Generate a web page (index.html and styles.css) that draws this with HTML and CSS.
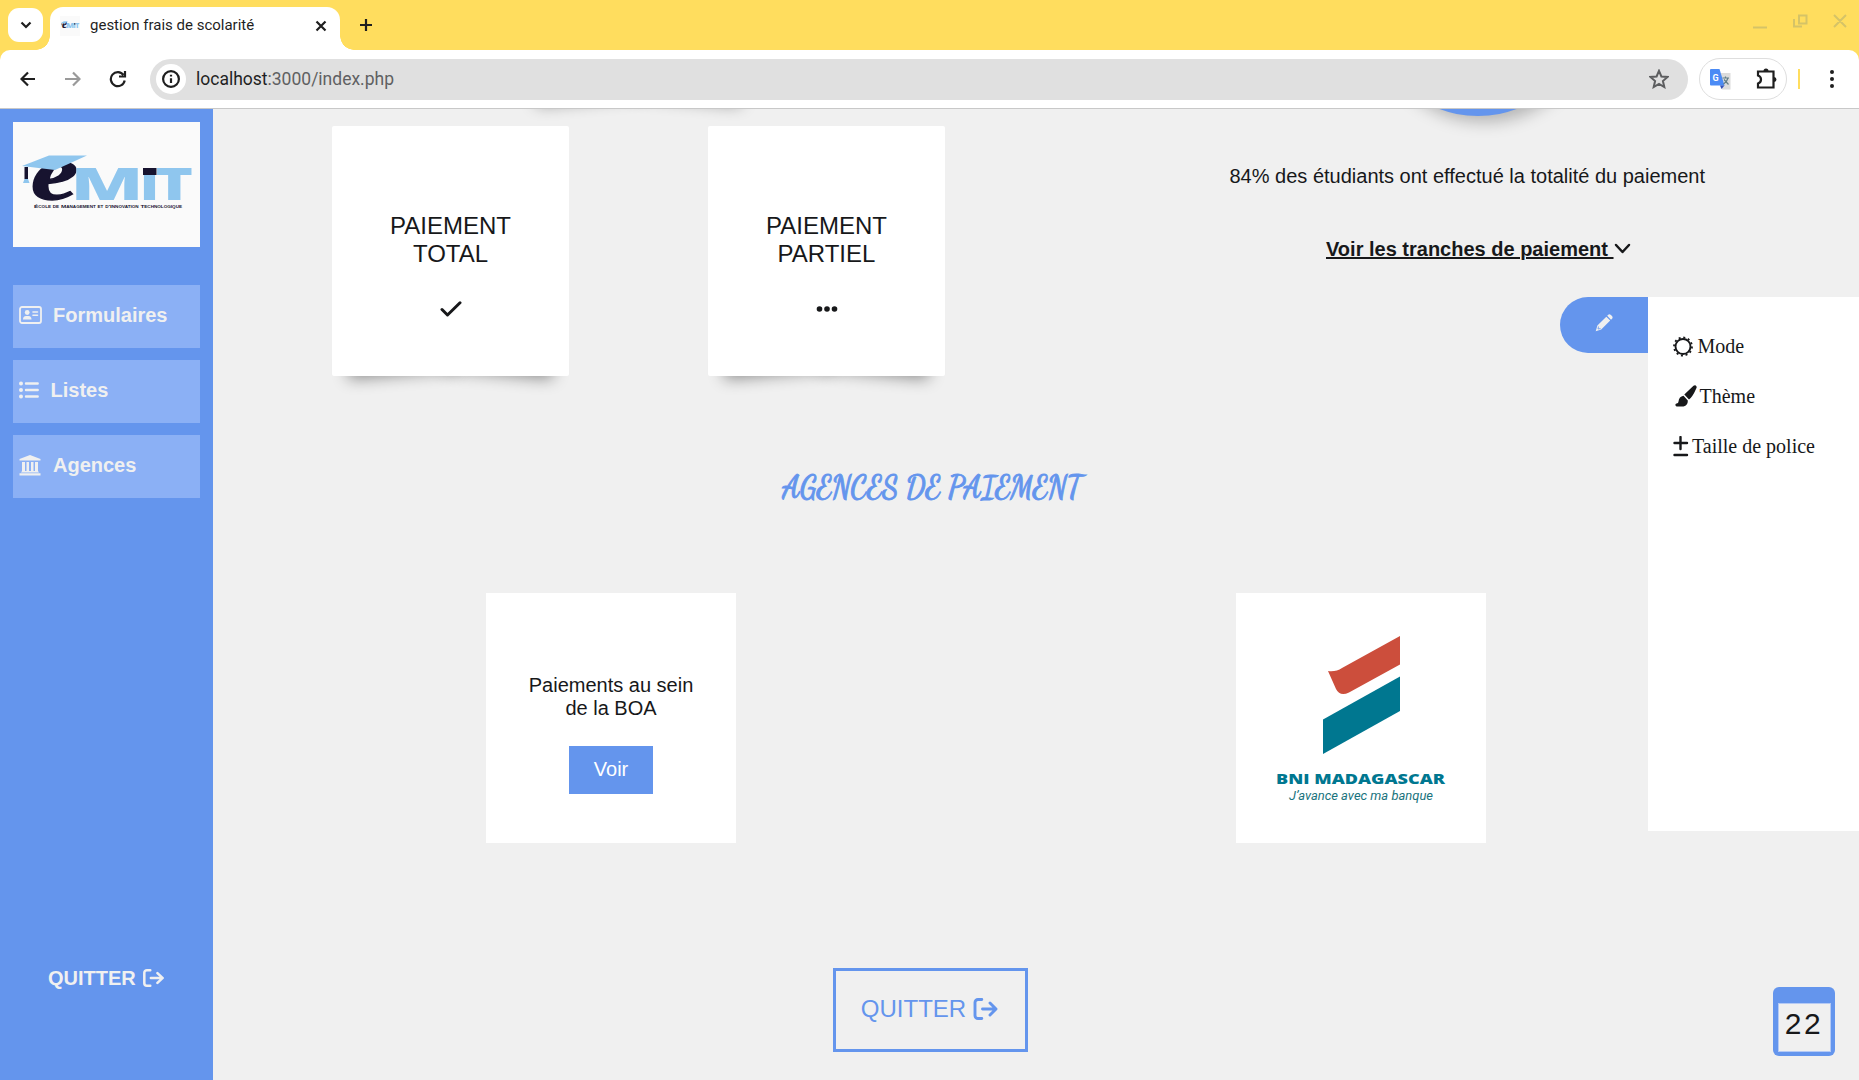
FILE: index.html
```html
<!DOCTYPE html>
<html lang="fr">
<head>
<meta charset="utf-8">
<title>gestion frais de scolarité</title>
<link rel="stylesheet" href="styles.css">
</head>
<body>
<svg class="defs" width="0" height="0">
  <symbol id="emit" viewBox="0 0 187 125">
    <rect width="187" height="125" fill="#fafafa"/>
    <text class="logo-e" x="18" y="76.500" textLength="47" lengthAdjust="spacingAndGlyphs">e</text>
    <path d="M9 44 36 33.500H74L42 48Z" fill="#8fc6ee"/>
    <path d="M11.500 45H15V57H11.500Z" fill="#17132f"/>
    <path d="M11.500 57H15L16.500 61H10Z" fill="#8fc6ee"/>
    <g class="logo-mit">
      <text x="57.500" y="77.500" textLength="73" lengthAdjust="spacingAndGlyphs">M</text>
      <text x="126.500" y="77.500" textLength="20" lengthAdjust="spacingAndGlyphs">I</text>
      <text x="142.500" y="77.500" textLength="37.500" lengthAdjust="spacingAndGlyphs">T</text>
    </g>
    <path d="M130 46h13.500v7H130Z" fill="#17132f"/>
    <text class="logo-sub" x="21" y="85.500" textLength="148" lengthAdjust="spacingAndGlyphs">École de Management et d'Innovation Technologique</text>
  </symbol>
  <symbol id="exit" viewBox="0 0 24 22">
    <path d="M8.300 1.500H4.500A3 3 0 0 0 1.500 4.500V17.500A3 3 0 0 0 4.500 20.500H8.300M9 11H22M16.500 5 22.500 11 16.500 17" fill="none" stroke="currentColor" stroke-width="2.900" stroke-linecap="round" stroke-linejoin="round"/>
  </symbol>
</svg>

<header class="browser">
  <div class="tabs">
    <button class="tab-search"><svg width="12" height="8"><path d="M1.500 1.500 6 6 10.500 1.500" class="s2"/></svg></button>
    <div class="tab">
      <svg class="favicon" width="20" height="20" viewBox="0 0 187 125" preserveAspectRatio="none"><use href="#emit" width="187" height="125"/></svg>
      <span class="tab-title">gestion frais de scolarité</span>
      <svg width="12" height="12"><path d="M1.500 1.500 10.500 10.500M10.500 1.500 1.500 10.500" class="s2"/></svg>
    </div>
    <svg class="new-tab" width="14" height="14"><path d="M7 1V13M1 7H13" class="s2"/></svg>
    <svg class="window-buttons" width="96" height="16" viewBox="0 0 96 16"><path d="M0 13.500H14M41 5V12.500H49M46 1.500H53.500V9.500H46ZM81 1 93 13M93 1 81 13"/></svg>
  </div>
  <div class="toolbar">
    <svg class="back" width="16" height="16"><path d="M15 8H2M8 1.500 1.500 8 8 14.500" class="s2"/></svg>
    <svg class="forward" width="16" height="16"><path d="M0 8H14M8 1.500 14.500 8 8 14.500" class="s2"/></svg>
    <svg class="reload" width="18" height="18"><path d="M14.500 5A7 7 0 1 0 15.700 10.500M16 1V6.500H10" class="s2"/></svg>
    <div class="address">
      <span class="info"><svg width="18" height="18"><circle cx="9" cy="9" r="7.900" class="s2"/><path d="M9 8.200V13M9 4.800V6.600" class="s2"/></svg></span>
      <span class="url">localhost<i>:3000/index.php</i></span>
      <svg class="star" width="20" height="20"><path d="M10 1.800 12.400 7.500 18.500 8 13.900 12 15.300 18 10 14.800 4.700 18 6.100 12 1.500 8 7.600 7.500Z"/></svg>
    </div>
    <div class="extensions">
      <svg width="21" height="21" viewBox="0 0 21 21"><path d="M8 4H20.500V20.500H12Z" fill="#dcdcdc"/><path d="M0 1Q0 0 1 0H9.500L14.500 16.500H1Q0 16.500 0 15.500Z" fill="#4b8bf5"/><path d="M10 16.500H14.500L11.500 20Z" fill="#3451b8"/><path d="M12.500 9H19M15.500 7.500V9M18 9Q17 13 13.500 15M14 10.500 18.500 15.500" fill="none" stroke="#607d86" stroke-width="1.200"/><text x="2.500" y="12" class="g-mark">G</text></svg>
      <svg width="21" height="22" viewBox="0 0 21 22"><path d="M2 3.500H17.500V19.500H2V15.500Q5 14.500 5 11.500T2 7.500Z" class="s2"/><path d="M7.500 3A2.500 2.500 0 0 1 12.500 3ZM18 9A2.500 2.500 0 0 1 18 14Z" fill="#1f1f1f"/></svg>
    </div>
    <span class="divider"></span>
    <svg width="4" height="18" viewBox="0 0 4 18" fill="#1f1f1f"><circle cx="2" cy="2" r="2"/><circle cx="2" cy="9" r="2"/><circle cx="2" cy="16" r="2"/></svg>
  </div>
</header>

<div class="page">
  <aside class="sidebar">
    <svg class="logo" width="187" height="125"><use href="#emit" width="187" height="125"/></svg>
    <nav>
      <a class="nav-item wide"><svg width="23" height="18" viewBox="0 0 23 18"><rect x="1" y="1" width="21" height="16" rx="2" fill="none" stroke="currentColor" stroke-width="1.800"/><circle cx="8.200" cy="6.500" r="2.400"/><path d="M4 13.500Q4 10 7 10H9.500Q12.500 10 12.500 13.500Z"/><path d="M14 6H18.500M14 9.300H18.500" stroke="currentColor" stroke-width="1.600" stroke-linecap="round"/></svg>Formulaires</a>
      <a class="nav-item list"><svg width="20" height="18" viewBox="0 0 20 18"><circle cx="2" cy="2.500" r="2"/><circle cx="2" cy="9" r="2"/><circle cx="2" cy="15.500" r="2"/><path d="M7 2.500H18.700M7 9H18.700M7 15.500H18.700" stroke="currentColor" stroke-width="2.400" stroke-linecap="round"/></svg>Listes</a>
      <a class="nav-item bank"><svg width="22" height="21" viewBox="0 0 22 21"><path d="M11 0 21.500 4V5.500H.5V4ZM3 7H6V16H7.500V7H10V16H12V7H14.500V16H16V7H19V16L20 17.500H2L3 16ZM.5 18.300H21.500V20.500H.5Z"/></svg>Agences</a>
    </nav>
    <a class="side-quit">QUITTER <svg width="21" height="18" viewBox="0 0 24 22" preserveAspectRatio="none"><use href="#exit" width="24" height="22"/></svg></a>
  </aside>

  <main class="content">
    <span class="pay-card scrolled-card"></span>
    <span class="chart"></span>
    <section class="summary">
      <div class="pay-cards">
        <article class="pay-card"><h3>PAIEMENT<br>TOTAL</h3><svg width="22" height="16" viewBox="0 0 22 16"><path d="M2 8.500 7.500 14 20 1.800" fill="none" stroke="currentColor" stroke-width="3" stroke-linecap="round" stroke-linejoin="round"/></svg></article>
        <article class="pay-card"><h3>PAIEMENT<br>PARTIEL</h3><svg width="22" height="16" viewBox="0 0 22 16"><circle cx="3.500" cy="8" r="2.800"/><circle cx="11" cy="8" r="2.800"/><circle cx="18.500" cy="8" r="2.800"/></svg></article>
      </div>
      <div class="stats">
        <p>84% des étudiants ont effectué la totalité du paiement</p>
        <a class="more"><u>Voir les tranches de paiement </u><svg width="17" height="12" viewBox="0 0 17 12"><path d="M2 2 8.500 9 15 2" fill="none" stroke="currentColor" stroke-width="2.500" stroke-linecap="round" stroke-linejoin="round"/></svg></a>
      </div>
    </section>

    <h2 class="heading"><svg width="310" height="42"><text x="3" y="31.500" textLength="300" lengthAdjust="spacingAndGlyphs">AGENCES DE PAIEMENT</text></svg></h2>

    <section class="agencies">
      <article class="agency">
        <p>Paiements au sein<br>de la BOA</p>
        <a class="view">Voir</a>
      </article>
      <article class="agency">
        <svg width="250" height="250"><path d="M92 78Q100 79 106 75L164 43V71.500L113 99.500Q104 104 100 96Z" fill="#cc4e3c"/><path d="M87 126.500 164 83.500V118L87 161Z" fill="#007790"/><text class="bni" x="40" y="190.500" textLength="169" lengthAdjust="spacingAndGlyphs">BNI MADAGASCAR</text><text class="slogan" x="53" y="206.500" textLength="144" lengthAdjust="spacingAndGlyphs">J’avance avec ma banque</text></svg>
      </article>
    </section>

    <a class="quit">QUITTER <svg width="25" height="22"><use href="#exit" width="25" height="22"/></svg></a>
  </main>

  <div class="settings">
    <button class="edit"><svg width="18" height="18" viewBox="0 0 18 18" fill="#f0f0f0"><path d="M12.200 1.800 13.200.8Q14.500-.3 15.900.9L17 2.100Q18.200 3.500 17 4.800L16 5.700ZM11.300 2.700 15.200 6.600 6.200 15.500 .7 17.300 2.400 11.600Z"/><path d="M3.500 12.500 3 15 5.500 14.500" fill="none" stroke="#6495ed" stroke-width=".8"/></svg></button>
    <div class="panel">
      <a class="mode"><svg width="20" height="21" viewBox="0 0 20 21"><circle cx="10" cy="10.500" r="7.500" fill="none" stroke="currentColor" stroke-width="1.900"/><circle cx="10" cy="10.500" r="9" fill="none" stroke="currentColor" stroke-width="1.800" stroke-dasharray="2 2.712"/></svg>Mode</a>
      <a class="theme"><svg width="22" height="22" viewBox="0 0 22 22"><path d="M21.500 1.500Q20.500-.5 18.500.8L9.300 9.500 14 14.500Q17.500 12 21 4Q22 2.500 21.500 1.500ZM8.500 10.700Q4 11.500 3.500 16.500 3.500 18.500 1.500 18.500 0 19 .5 20.500L1.500 21.500H8.500Q13 20 12.800 15.500Z"/></svg>Thème</a>
      <a class="size"><svg width="16" height="21" viewBox="0 0 16 21"><path d="M7.500 1V13M1.500 7H14M1.500 19H14" fill="none" stroke="currentColor" stroke-width="2.400" stroke-linecap="round"/></svg>Taille de police</a>
    </div>
  </div>
  <div class="calendar"><span>22</span></div>
</div>
</body>
</html>
```
FILE: styles.css
```css
* { box-sizing: border-box; }
body { margin: 0; height: 1080px; overflow: hidden; background: #f0f0f0; color: #17181a; font-family: "Liberation Sans", Arial, sans-serif; display: flex; flex-direction: column; }
svg { display: block; flex: none; }
button { border: 0; padding: 0; display: flex; align-items: center; justify-content: center; }
h2, h3, p { margin: 0; font-weight: 400; }
.defs { position: absolute; }
.s2 { fill: none; stroke: currentColor; stroke-width: 2.2; }

.browser { height: 109px; flex: none; background: #ffdd5e; color: #1f1f1f; font-family: Roboto, sans-serif; border-bottom: 1px solid #c8c8c8; }
.tabs { height: 50px; display: flex; align-items: flex-start; padding: 7px 16px 0 8px; }
.tab-search { width: 35px; height: 34px; margin-top: 1px; border-radius: 11px; background: #fff; color: #1f1f1f; }
.tab { position: relative; width: 290px; height: 43px; margin-left: 7px; padding: 0 13px 6px 10px; border-radius: 13px 13px 0 0; background: #fff; display: flex; align-items: center; }
.tab::before, .tab::after { content: ""; position: absolute; bottom: 0; width: 14px; height: 14px; }
.tab::before { left: -14px; background: radial-gradient(circle at 0 0, transparent 13.5px, #fff 14px); }
.tab::after { right: -14px; background: radial-gradient(circle at 100% 0, transparent 13.5px, #fff 14px); }
.tab-title { margin: -1px 0 0 10px; flex: 1; font-size: 15px; white-space: nowrap; }
.new-tab { margin: 11px 0 0 19px; }
.window-buttons { margin: 7px -6px 0 auto; fill: none; stroke: #d5c367; stroke-width: 2; }
.toolbar { height: 58px; background: #fff; border-radius: 10px 10px 0 0; display: flex; align-items: center; padding: 0 25px 0 20px; }
.forward { margin-left: 29px; color: #9a9a9a; }
.reload { margin-left: 28px; }
.address { height: 41px; flex: 1; margin-left: 23px; border-radius: 21px; background: #e0e0e0; display: flex; align-items: center; padding: 0 19px 0 6px; }
.info { width: 30px; height: 30px; border-radius: 50%; background: #fff; display: grid; place-items: center; }
.url { flex: 1; margin-left: 10px; font-size: 17.5px; }
.url i { font-style: normal; color: #5f6062; }
.star { fill: none; stroke: #5d5e60; stroke-width: 2; }
.extensions { width: 88px; height: 42px; margin-left: 11px; border: 1px solid #dedede; border-radius: 21px; display: flex; align-items: center; justify-content: space-between; padding: 0 9px 0 10px; }
.g-mark { font: bold 9px Roboto, sans-serif; fill: #fff; }
.divider { width: 2px; height: 20px; margin: 0 30px 0 11px; background: #ffdd5e; }

.page { position: relative; flex: 1; display: flex; overflow: hidden; }
.sidebar { width: 213px; flex: none; background: #6495ed; color: #f0f0f0; padding: 13px; display: flex; flex-direction: column; font-size: 20px; font-weight: 700; }
.logo-e { font: italic bold 79px "Liberation Serif", serif; fill: #17132f; stroke: #17132f; stroke-width: 1.4; }
.logo-mit { font: 800 43.500px "Open Sans", sans-serif; fill: #8fc6ee; }
.logo-sub { font: bold 4.2px "Liberation Sans", sans-serif; font-variant: small-caps; fill: #17132f; }
nav { margin-top: 38px; display: flex; flex-direction: column; gap: 12px; }
.nav-item { height: 63px; background: #8bb0f5; display: flex; align-items: center; padding: 0 5.5px 3px; fill: currentColor; gap: 11.5px; }
.nav-item.bank { gap: 12.5px; }
.nav-item.list { gap: 12px; }
.side-quit { margin: 468px 0 0 35px; line-height: 24px; display: flex; align-items: center; gap: 7px; font-size: 20px; }

.content { position: relative; z-index: 0; flex: 1; overflow: hidden; }
.chart { position: absolute; left: 1155px; top: -213px; width: 220px; height: 220px; border-radius: 50%; background: #6495ed; box-shadow: 6px 6px 16px rgba(0,0,0,.25); }
.summary { display: flex; padding: 17px 0 0 119px; height: 267px; }
.pay-cards { display: flex; gap: 139px; }
.pay-card { position: relative; width: 237px; height: 250px; border-radius: 2px; background: #fff; display: flex; flex-direction: column; align-items: center; fill: currentColor; }
.pay-card::before, .pay-card::after { content: ""; position: absolute; z-index: -1; bottom: 13px; width: 46%; height: 20px; box-shadow: 0 11px 16px rgba(0,0,0,.45); }
.pay-card::before { left: 15px; transform: rotate(-5deg); }
.pay-card::after { right: 15px; transform: rotate(5deg); }
.scrolled-card { position: absolute; left: 307px; top: -257px; }
.pay-card h3 { margin-top: 86px; font-size: 24px; line-height: 28px; text-align: center; }
.pay-card svg { margin-top: 33px; }
.stats { padding-top: 38px; margin-left: 284.5px; font-size: 20px; line-height: 24px; white-space: nowrap; }
.more { display: flex; align-items: center; margin: 49px 0 0 96.5px; font-weight: 700; }
.more u { white-space: pre; text-decoration-thickness: 2px; }
.heading { height: 42px; margin: 89px 0 0 566px; }
.heading text { font: 700 32px "Dancing Script", cursive; fill: #6495ed; stroke: #6495ed; stroke-width: .9; }
.agencies { margin: 86px 0 0 273px; display: flex; gap: 500px; }
.agency { width: 250px; height: 250px; background: #fff; font-size: 20px; line-height: 23px; text-align: center; display: flex; flex-direction: column; align-items: center; }
.agency p { margin-top: 81px; }
.view { width: 84px; height: 48px; margin-top: 26px; background: #6495ed; color: #fff; line-height: 47px; }
.bni { font: 800 14.5px "Open Sans", sans-serif; fill: #007790; }
.slogan { font: italic 400 12.5px Roboto, sans-serif; fill: #19737d; }
.quit { width: 195px; height: 84px; margin: 125px 0 0 620px; border: 3px solid #6495ed; color: #6495ed; font-size: 24px; display: flex; align-items: center; justify-content: center; gap: 7px; padding: 0 2px 3px 0; }

.settings { position: absolute; z-index: 2; top: 188px; right: 0; display: flex; align-items: flex-start; }
.edit { width: 88px; height: 56px; border-radius: 28px 0 0 28px; background: #6495ed; padding-bottom: 5px; }
.panel { width: 211px; height: 534px; background: #fff; padding: 37px 0 0 24.5px; display: flex; flex-direction: column; gap: 26px; font: 20px/24px "Liberation Serif", serif; }
.panel a { display: flex; align-items: center; gap: 5px; fill: currentColor; }
.panel .theme { padding-left: 2px; gap: 3px; }
.panel .size { gap: 3.5px; }
.calendar { position: absolute; z-index: 2; left: 1773px; top: 878px; width: 62px; height: 69px; border-radius: 6px; background: #6495ed; padding: 16px 4px 4px 5px; }
.calendar span { display: block; height: 49px; border: 1px solid #b5caf5; background: #f0f0f0; text-align: center; font-size: 30px; line-height: 40px; letter-spacing: 2.5px; padding-right: 1px; }
```
